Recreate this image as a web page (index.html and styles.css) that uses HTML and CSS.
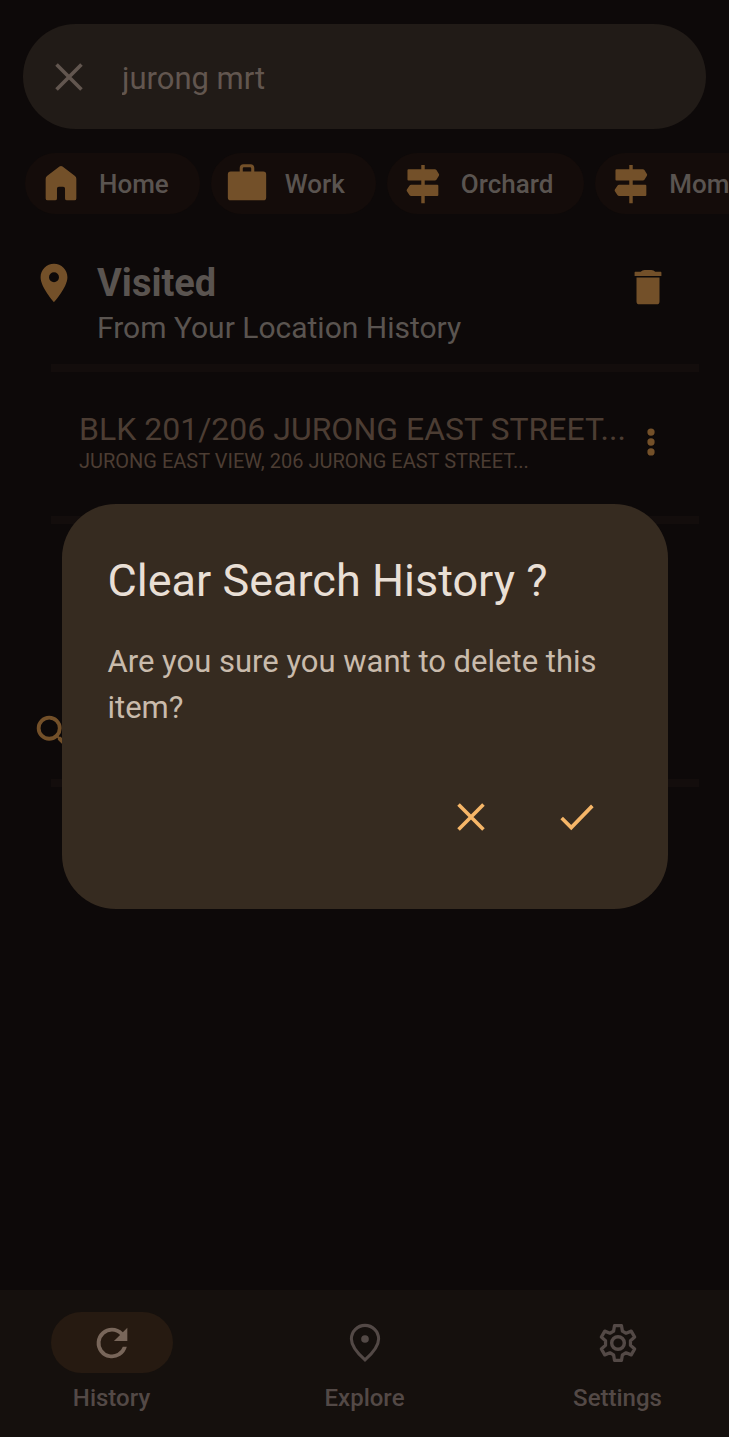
FILE: index.html
```html
<!DOCTYPE html>
<html lang="en">
<head>
<meta charset="utf-8">
<meta name="viewport" content="width=device-width, initial-scale=1">
<title>History</title>
<link rel="stylesheet" href="styles.css">
</head>
<body>
<svg width="0" height="0" class="sprite" aria-hidden="true">
  <symbol id="close" viewBox="0 0 24 24"><path d="M5.5 5.5l13 13M18.5 5.5l-13 13" fill="none" stroke="currentColor" stroke-width="1.9"/></symbol>
  <symbol id="signpost" viewBox="0 0 24 24"><path d="M11.1 2.1h1.8v2.2h5.3q.5 0 .8.4l1.3 2.1q.3.4 0 .9L19 9.8q-.3.4-.8.4h-5.3v2.2h6.6q.5 0 .5.5v4.9q0 .5-.5.5h-6.6v3.8h-1.8v-3.8H5.8q-.5 0-.8-.4l-1.4-2.1q-.3-.5 0-.9L5 12.8q.3-.4.8-.4h5.3v-2.2H4.400q-.5 0-.5-.5V4.800q0-.5.5-.5h6.700z" fill="currentColor"/></symbol>
</svg>

<div class="app">
  <main class="content">
    <form class="search">
      <button class="icon-button" type="button" aria-label="Clear text"><svg class="icon"><use href="#close"/></svg></button>
      <input class="search-input" type="text" value="jurong mrt" aria-label="Search">
    </form>

    <div class="chips">
      <button class="chip" type="button">
        <svg class="icon amber" viewBox="0 0 24 24"><path d="M12 2.600Q12.400 2.600 12.800 2.900L19.300 7.800Q20 8.300 20 9.200V19.500Q20 20.500 19 20.500H15.100Q14.100 20.500 14.100 19.500V14.400Q14.100 13.400 13.100 13.400H10.900Q9.900 13.400 9.900 14.400V19.500Q9.900 20.500 8.900 20.500H5Q4 20.500 4 19.500V9.200Q4 8.300 4.700 7.800L11.200 2.900Q11.600 2.600 12 2.600Z" fill="currentColor"/></svg>
        Home
      </button>
      <button class="chip" type="button">
        <svg class="icon amber" viewBox="0 0 24 24"><path d="M8.200 5.500V3.700Q8.200 1.700 10.200 1.700H13.800Q15.800 1.700 15.800 3.700V5.500H20.500Q22 5.500 22 7V19Q22 20.500 20.500 20.500H3.500Q2 20.500 2 19V7Q2 5.500 3.500 5.500ZM9.800 5.500H14.200V3.900Q14.200 3.300 13.600 3.300H10.400Q9.800 3.300 9.800 3.900Z" fill="currentColor" fill-rule="evenodd"/></svg>
        Work
      </button>
      <button class="chip" type="button"><svg class="icon amber"><use href="#signpost"/></svg>Orchard</button>
      <button class="chip" type="button"><svg class="icon amber"><use href="#signpost"/></svg>Mom</button>
    </div>

    <section>
      <header class="section-head">
        <svg class="icon amber" viewBox="0 0 24 24"><path d="M12 2C8.130 2 5 5.130 5 9c0 5.250 7 13 7 13s7-7.750 7-13c0-3.870-3.130-7-7-7zm0 9.600a2.600 2.600 0 1 1 0-5.200 2.600 2.600 0 0 1 0 5.200z" fill="currentColor"/></svg>
        <div class="section-text">
          <h1 class="section-title">Visited</h1>
          <p class="section-sub">From Your Location History</p>
        </div>
        <button class="icon-button delete amber" type="button" aria-label="Clear visited history">
          <svg class="icon" viewBox="0 0 24 24"><path d="M6 19.500Q6 21 7.500 21h9Q18 21 18 19.500V7H6zM18.700 4.100h-2.900q-.8-1-2-1h-3.600q-1.200 0-2 1H5.300Q5 4.100 5 4.500v1.700h14V4.500q0-.4-.3-.4z" fill="currentColor"/></svg>
        </button>
      </header>
      <hr class="divider">
      <article class="place">
        <div class="place-text">
          <h2 class="place-name">BLK 201/206 JURONG EAST STREET...</h2>
          <p class="place-address">JURONG EAST VIEW, 206 JURONG EAST STREET...</p>
        </div>
        <button class="icon-button amber" type="button" aria-label="More options">
          <svg class="icon" viewBox="0 0 24 24"><g fill="currentColor"><circle cx="12" cy="6.800" r="1.900"/><circle cx="12" cy="12" r="1.900"/><circle cx="12" cy="17.200" r="1.900"/></g></svg>
        </button>
      </article>
      <hr class="divider">
    </section>

    <section class="searched">
      <header class="section-head">
        <svg class="icon amber" viewBox="0 0 24 24"><path d="M15.500 14h-.790l-.280-.270A6.470 6.470 0 0 0 16 9.500 6.500 6.500 0 1 0 9.500 16c1.610 0 3.090-.590 4.230-1.570l.270.280v.790l5 4.990L20.490 19l-4.990-5zm-6 0a4.500 4.500 0 1 1 0-9 4.500 4.500 0 0 1 0 9z" fill="currentColor"/></svg>
      </header>
      <hr class="divider">
    </section>
  </main>

  <nav class="nav">
    <a class="nav-item active" href="#history">
      <span class="nav-icon"><svg class="icon" viewBox="0 0 24 24"><path d="M17.650 6.350A7.960 7.960 0 0 0 12 4a8 8 0 1 0 7.730 10h-2.080A6 6 0 1 1 12 6c1.660 0 3.140.690 4.220 1.780L13 11h7V4z" fill="currentColor"/></svg></span>
      History
    </a>
    <a class="nav-item" href="#explore">
      <span class="nav-icon"><svg class="icon" viewBox="0 0 24 24"><path d="M12 20.800C8 17.300 4.900 13.800 4.900 9.900a7.100 7.100 0 0 1 14.200 0C19.100 13.800 16 17.300 12 20.800z" fill="none" stroke="currentColor" stroke-width="1.600"/><circle cx="12" cy="9.900" r="2" fill="currentColor"/></svg></span>
      Explore
    </a>
    <a class="nav-item" href="#settings">
      <span class="nav-icon"><svg class="icon" viewBox="0 0 24 24"><path d="M10.200 2.900h3.600l.5 2.900 1.900 1.100 2.700-1.100 1.800 3.100-2.200 1.900v2.400l2.200 1.900-1.800 3.100-2.700-1.100-1.900 1.100-.5 2.900h-3.600l-.5-2.900-1.900-1.100-2.700 1.100-1.800-3.100 2.200-1.900v-2.400L3.300 8.900l1.800-3.100 2.700 1.100 1.900-1.100z" fill="none" stroke="currentColor" stroke-width="1.700" stroke-linejoin="round"/><circle cx="12" cy="12" r="3.300" fill="none" stroke="currentColor" stroke-width="1.800"/></svg></span>
      Settings
    </a>
  </nav>
</div>

<div class="overlay">
  <div class="dialog" role="alertdialog" aria-modal="true" aria-labelledby="dialog-title" aria-describedby="dialog-body">
    <h2 class="dialog-title" id="dialog-title">Clear Search History ?</h2>
    <p class="dialog-body" id="dialog-body">Are you sure you want to delete this item?</p>
    <div class="dialog-actions">
      <button class="dialog-button" type="button" aria-label="Cancel"><svg class="icon"><use href="#close"/></svg></button>
      <button class="dialog-button" type="button" aria-label="Confirm"><svg class="icon" viewBox="0 0 24 24"><path d="M4 12.500l5 5L20 6.200" fill="none" stroke="currentColor" stroke-width="1.900"/></svg></button>
    </div>
  </div>
</div>
</body>
</html>
```

FILE: styles.css
```css
* {
  box-sizing: border-box;
  margin: 0;
  padding: 0;
}

body {
  background: #0d0909;
  color: #5a5450;
  font-family: Roboto, "Noto Sans", sans-serif;
}

button,
input {
  border: 0;
  background: none;
  color: inherit;
  font: inherit;
}

.sprite {
  position: absolute;
}

.app {
  display: flex;
  flex-direction: column;
  min-height: 100vh;
}

.content {
  flex: 1;
  overflow: hidden;
}

.icon {
  display: block;
  flex: none;
  width: 46px;
  height: 46px;
}

.icon-button {
  flex: none;
}

.amber {
  color: #735029;
}

/* Search field */
.search {
  display: flex;
  align-items: center;
  gap: 30px;
  height: 105px;
  margin: 24px 23px 0;
  padding: 0 23px;
  border-radius: 53px;
  background: #211b17;
  color: #62564f;
}

.search-input {
  flex: 1;
  min-width: 0;
  height: 60px;
  padding-top: 4px;
  font-size: 31px;
  outline: 0;
}

/* Shortcut chips */
.chips {
  display: flex;
  gap: 11px;
  margin-top: 24px;
  padding-left: 25px;
  overflow: hidden;
}

.chip {
  display: flex;
  flex: none;
  align-items: center;
  gap: 15px;
  height: 61px;
  padding: 0 31px 0 13px;
  border-radius: 31px;
  background: #140c0a;
  font-size: 26px;
  font-weight: 500;
}

/* History sections */
.section-head {
  display: flex;
  align-items: flex-start;
  gap: 20px;
  margin-top: 46px;
  padding: 0 58px 16px 31px;
}

.section-text {
  flex: 1;
}

.section-title {
  font-size: 38px;
  font-weight: 700;
  line-height: 47px;
}

.section-sub {
  font-size: 30px;
  line-height: 41px;
}

.delete {
  padding-top: 4px;
}

.divider {
  height: 8px;
  margin: 0 30px 0 51px;
  border: 0;
  background: #130d0c;
}

.place {
  display: flex;
  align-items: center;
  padding: 38px 55px 42px 79px;
  color: #4c3d33;
}

.place-text {
  flex: 1;
  min-width: 0;
  white-space: nowrap;
}

.place-name {
  font-size: 32px;
  font-weight: 400;
  line-height: 38px;
}

.place-address {
  font-size: 20px;
  line-height: 26px;
}

.searched {
  margin-top: 186px;
}

.searched .section-head {
  padding-bottom: 23px;
}

/* Bottom navigation */
.nav {
  display: grid;
  grid-template-columns: repeat(3, 1fr);
  gap: 30px;
  height: 147px;
  padding-top: 22px;
  background: #15100d;
}

.nav-item {
  display: flex;
  flex-direction: column;
  align-items: center;
  gap: 10px;
  color: #534946;
  font-size: 24px;
  font-weight: 500;
  line-height: 30px;
  text-decoration: none;
}

.nav-icon {
  display: grid;
  place-items: center;
  width: 122px;
  height: 61px;
  border-radius: 31px;
}

.active .nav-icon {
  background: #261a11;
  color: #78665a;
}

/* Confirmation dialog */
.overlay {
  position: fixed;
  inset: 0;
  display: flex;
  align-items: center;
  justify-content: center;
  padding: 0 61px 24px;
}

.dialog {
  width: 100%;
  max-width: 606px;
  padding: 46px;
  border-radius: 54px;
  background: #362b20;
  color: #e9dfd5;
}

.dialog-title {
  font-size: 45px;
  font-weight: 400;
  line-height: 62px;
}

.dialog-body {
  margin-top: 27px;
  color: #c9bbac;
  font-size: 31px;
  line-height: 46px;
}

.dialog-actions {
  display: flex;
  justify-content: flex-end;
  gap: 16px;
  margin-top: 40px;
  color: #f6b668;
}

.dialog-button {
  display: grid;
  place-items: center;
  width: 90px;
  height: 92px;
}
```
